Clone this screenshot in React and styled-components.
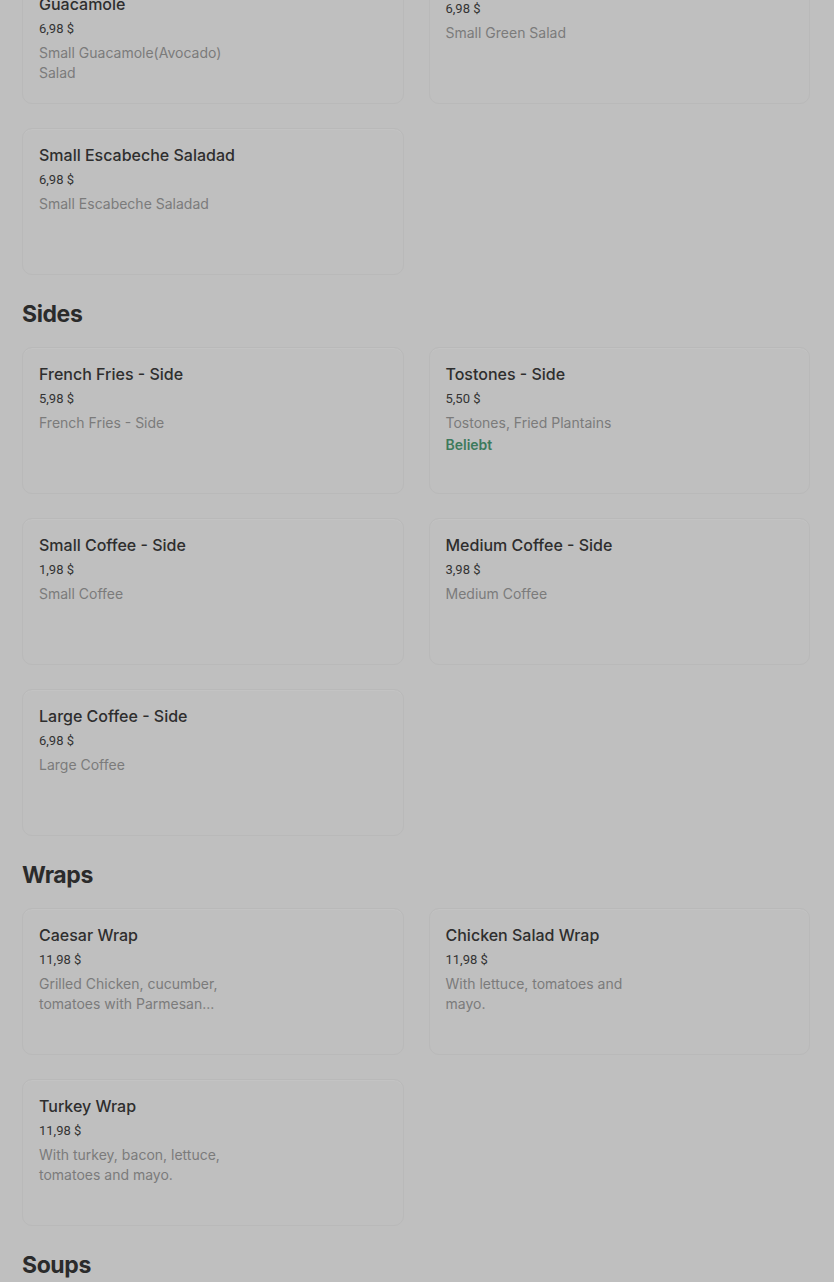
import React from "react";
import styled, { createGlobalStyle } from "styled-components";

const Global = createGlobalStyle`
  html, body { margin: 0; padding: 0; background: #bfbfbf; }
  body { font-family: Inter, Roboto, "Liberation Sans", sans-serif; -webkit-font-smoothing: antialiased; }
`;

const Viewport = styled.div`
  width: 834px;
  height: 1282px;
  overflow: hidden;
  background: #bfbfbf;
`;

const Scroller = styled.div`
  margin-top: -43px;
  padding: 0 24px 0 22px;
`;

const SectionTitle = styled.h2`
  margin: 23px 0 17px;
  height: 32px;
  line-height: 32px;
  font-family: Inter, Roboto, sans-serif;
  font-size: 23px;
  font-weight: 700;
  letter-spacing: -0.4px;
  color: #2b2b2b;
`;

const Grid = styled.div`
  display: grid;
  grid-template-columns: 1fr 1fr;
  column-gap: 25px;
  row-gap: 24px;
`;

const Card = styled.div`
  box-sizing: border-box;
  min-height: 147px;
  padding: 16px;
  border: 1px solid #b9b9b9;
  border-radius: 10px;
  box-shadow: inset 0 1px 0 #c3c3c3;
`;

const Name = styled.div`
  max-width: 215px;
  font-family: Inter, Roboto, sans-serif;
  font-size: 16px;
  line-height: 20px;
  font-weight: 500;
  color: #2e2e2e;
`;

const Price = styled.div`
  margin-top: 5px;
  font-family: Roboto, "Liberation Sans", sans-serif;
  font-size: 13px;
  line-height: 20px;
  color: #333333;
`;

const Desc = styled.div`
  margin-top: 4px;
  max-width: 200px;
  font-family: Inter, Roboto, sans-serif;
  font-size: 14px;
  line-height: 20px;
  color: #7b7b7b;
`;

const Badge = styled.div`
  margin-top: 2px;
  font-family: Inter, Roboto, sans-serif;
  font-size: 14px;
  line-height: 20px;
  font-weight: 600;
  color: #3d7a5c;
`;

const sections = [
  {
    title: null,
    items: [
      { name: "Small Avocado Salad Guacamole", price: "6,98 $", desc: "Small Guacamole(Avocado) Salad" },
      { name: "Small Green Salad", price: "6,98 $", desc: "Small Green Salad" },
      { name: "Small Escabeche Saladad", price: "6,98 $", desc: "Small Escabeche Saladad" },
    ],
  },
  {
    title: "Sides",
    items: [
      { name: "French Fries - Side", price: "5,98 $", desc: "French Fries - Side" },
      { name: "Tostones - Side", price: "5,50 $", desc: "Tostones, Fried Plantains", badge: "Beliebt" },
      { name: "Small Coffee - Side", price: "1,98 $", desc: "Small Coffee" },
      { name: "Medium Coffee - Side", price: "3,98 $", desc: "Medium Coffee" },
      { name: "Large Coffee - Side", price: "6,98 $", desc: "Large Coffee" },
    ],
  },
  {
    title: "Wraps",
    items: [
      { name: "Caesar Wrap", price: "11,98 $", desc: "Grilled Chicken, cucumber, tomatoes with Parmesan..." },
      { name: "Chicken Salad Wrap", price: "11,98 $", desc: "With lettuce, tomatoes and mayo." },
      { name: "Turkey Wrap", price: "11,98 $", desc: "With turkey, bacon, lettuce, tomatoes and mayo." },
    ],
  },
  { title: "Soups", items: [] },
];

export default function App() {
  return (
    <Viewport>
      <Global />
      <Scroller>
        {sections.map((s, i) => (
          <section key={i}>
            {s.title && <SectionTitle>{s.title}</SectionTitle>}
            {s.items.length > 0 && (
              <Grid>
                {s.items.map((it) => (
                  <Card key={it.name}>
                    <Name>{it.name}</Name>
                    <Price>{it.price}</Price>
                    <Desc>{it.desc}</Desc>
                    {it.badge && <Badge>{it.badge}</Badge>}
                  </Card>
                ))}
              </Grid>
            )}
          </section>
        ))}
      </Scroller>
    </Viewport>
  );
}
